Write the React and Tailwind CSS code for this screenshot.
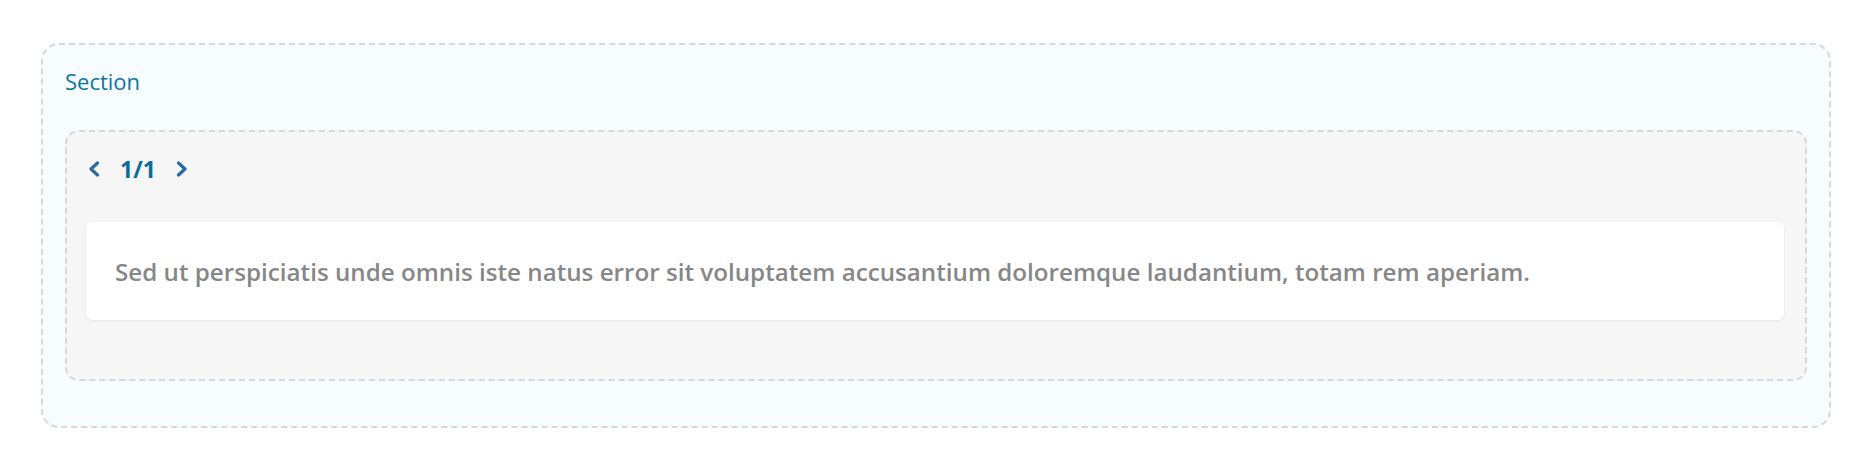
import React, { useState } from 'react';

const slides = [
  'Sed ut perspiciatis unde omnis iste natus error sit voluptatem accusantium doloremque laudantium, totam rem aperiam.',
];

const Chevron = ({ dir }) => (
  <svg width="14" height="16" viewBox="0 0 14 16" fill="none" aria-hidden="true">
    <polyline
      points={dir === 'left' ? '10.5,2 4,8 10.5,14' : '3.5,2 10,8 3.5,14'}
      stroke="#2a6aa6"
      strokeWidth="3.2"
      strokeLinecap="round"
      strokeLinejoin="round"
    />
  </svg>
);

export default function App() {
  const [index, setIndex] = useState(0);

  const prev = () => setIndex((i) => (i > 0 ? i - 1 : i));
  const next = () => setIndex((i) => (i < slides.length - 1 ? i + 1 : i));

  return (
    <div className="min-h-[468px] bg-white px-[41px] pt-[43px] font-['Open_Sans',sans-serif]">
      <div className="rounded-[18px] border-2 border-dashed border-[#d6d9db] bg-[#f7fcfe] px-[22px] pt-[21px] pb-[45px]">
        <h2 className="text-[22px] leading-[30px] text-[#0b75a2]">Section</h2>

        <div className="mt-[34px] rounded-[14px] border-2 border-dashed border-[#d6d8da] bg-[#f6f6f6] pl-[19px] pr-[21px] pt-[25px] pb-[59px]">
          <div className="flex h-[24px] items-center">
            <button onClick={prev} className="ml-[1px] flex items-center">
              <Chevron dir="left" />
            </button>
            <span className="ml-[19px] text-[23px] font-bold leading-[24px] text-[#0b6e96]">
              {index + 1}/{slides.length}
            </span>
            <button onClick={next} className="ml-[19px] flex items-center">
              <Chevron dir="right" />
            </button>
          </div>

          <div className="mt-[41px] rounded-md bg-white px-[29px] pt-[33px] pb-[32px] shadow-[0_1px_3px_rgba(0,0,0,0.08)]">
            <p className="text-[24.2px] font-semibold leading-[33px] text-[#878787]">{slides[index]}</p>
          </div>
        </div>
      </div>
    </div>
  );
}
